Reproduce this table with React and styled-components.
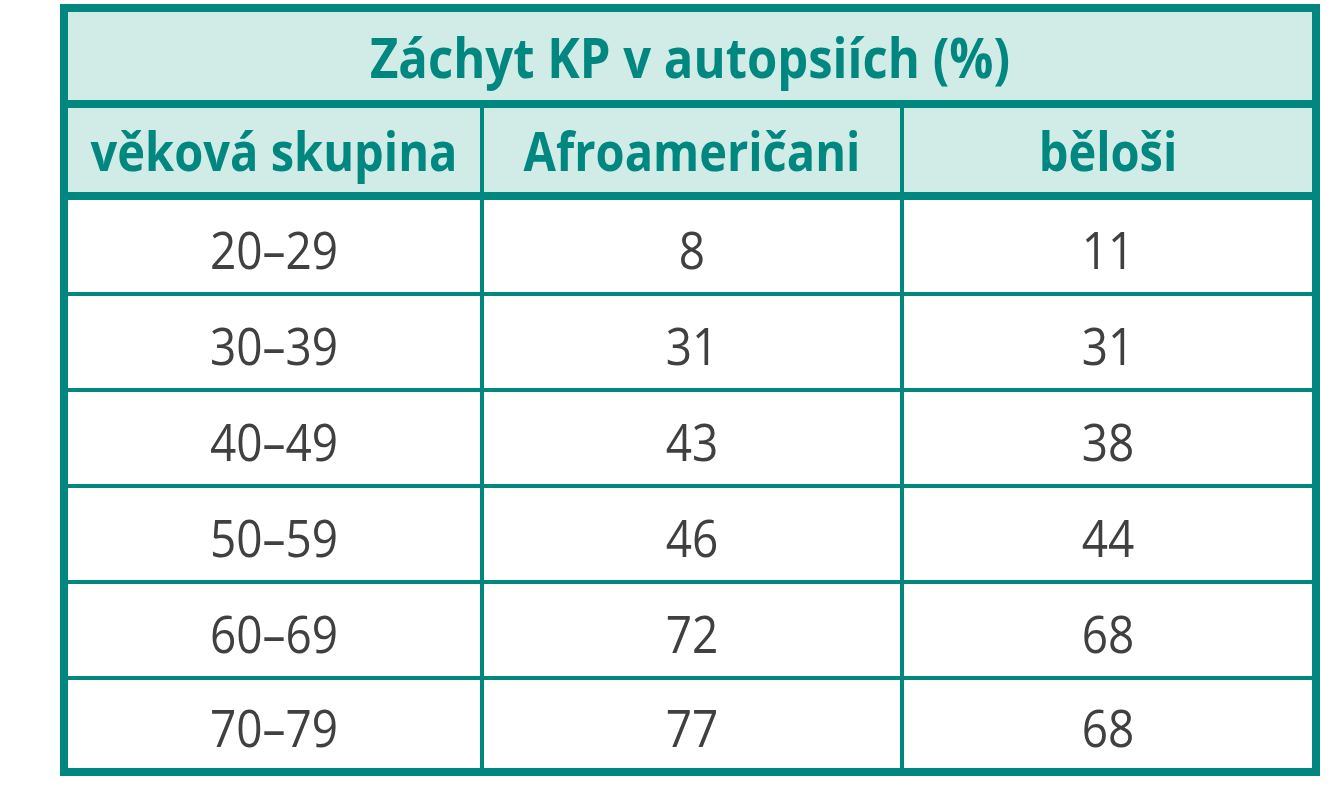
import React from 'react';
import styled, { createGlobalStyle } from 'styled-components';

const GlobalStyle = createGlobalStyle`
  html, body {
    margin: 0;
    padding: 0;
    background: #fff;
  }
  body {
    font-family: "Open Sans", "Noto Sans", sans-serif;
  }
`;

const teal = '#008780';
const light = '#d1ebe7';

const Table = styled.div`
  width: 1260px;
  margin: 4px 0 0 60px;
  box-sizing: border-box;
  border: 8px solid ${teal};
`;

const Title = styled.div`
  height: 88px;
  display: flex;
  align-items: center;
  justify-content: center;
  background: ${light};
  border-bottom: 8px solid ${teal};
  color: ${teal};
  font-weight: 700;
  font-size: 49px;
`;

const Row = styled.div`
  display: grid;
  grid-template-columns: 412px 420px 412px;
  height: ${(p) => p.$h}px;
  background: ${(p) => (p.$head ? light : '#fff')};
  border-bottom: ${(p) => p.$line}px solid ${teal};
  &:last-child {
    border-bottom: none;
  }
`;

const Cell = styled.div`
  display: flex;
  align-items: center;
  justify-content: center;
  padding-top: ${(p) => (p.$head ? 0 : 6)}px;
  box-sizing: border-box;
  & + & {
    border-left: 4px solid ${teal};
  }
  color: ${(p) => (p.$head ? teal : '#404040')};
  font-weight: ${(p) => (p.$head ? 700 : 400)};
  font-size: ${(p) => (p.$head ? 47 : 46)}px;
`;

// reference text is drawn slightly taller than it is wide
const Label = styled.span`
  display: inline-block;
  transform: scaleY(${(p) => p.$sy || 1.12});
`;

const rows = [
  ['20–29', '8', '11'],
  ['30–39', '31', '31'],
  ['40–49', '43', '38'],
  ['50–59', '46', '44'],
  ['60–69', '72', '68'],
  ['70–79', '77', '68'],
];

export default function App() {
  return (
    <>
      <GlobalStyle />
      <Table>
        <Title>
          <Label $sy={1.15}>Záchyt KP v autopsiích (%)</Label>
        </Title>
        <Row $head $h={84} $line={8}>
          <Cell $head><Label $sy={1.15}>věková skupina</Label></Cell>
          <Cell $head><Label $sy={1.15}>Afroameričani</Label></Cell>
          <Cell $head><Label $sy={1.15}>běloši</Label></Cell>
        </Row>
        {rows.map((r, i) => (
          <Row key={i} $h={i === rows.length - 1 ? 88 : 92} $line={4}>
            {r.map((v, j) => (
              <Cell key={j}><Label>{v}</Label></Cell>
            ))}
          </Row>
        ))}
      </Table>
    </>
  );
}
